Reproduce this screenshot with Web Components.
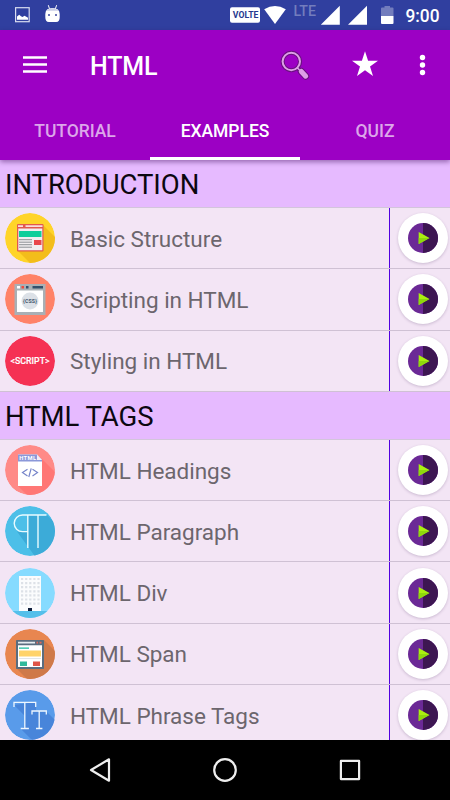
<!DOCTYPE html>
<html lang="en">
<head>
<meta charset="utf-8">
<title>HTML Examples</title>
<style>
html, body { margin: 0; height: 100%; overflow: hidden; }
body { font-family: Roboto, "Liberation Sans", sans-serif; }
</style>
</head>
<body>
<tutorial-app></tutorial-app>
<script>
const define = (name, html) => {
  const t = document.createElement('template');
  t.innerHTML = html;
  customElements.define(name, class extends HTMLElement {
    constructor() {
      super();
      this.attachShadow({ mode: 'open' }).append(t.content.cloneNode(true));
    }
  });
};

define('status-bar', `
<style>
:host { display: flex; height: 30px; background: #303f9f; color: #fff; }
svg { display: block; }
text { font-family: Roboto, sans-serif; }
</style>
<svg width="450" height="30" viewBox="0 0 450 30" fill="#fff">
  <rect x="15.6" y="7.7" width="13.6" height="14" fill="none" stroke="#d9dcf0" stroke-width="1.2"/>
  <path d="M17 19.8v-3.3l2.2-1.7 1.8 1.5 1.5.7 2-1.3 1.8 1 1.700 1v2.100z"/>
  <path d="M48.300 5.200l1.200 3.600M56.600 5.200l-1.200 3.600" stroke="#fff" stroke-width="1"/>
  <path d="M45.300 14q0-6 7.200-6t7.200 6v3q0 5-3.500 5h-7.400q-3.500 0-3.500-5z"/>
  <path d="M46.700 10.700q1.400-2.500 5.800-2.500t5.800 2.500z" fill="#c9cce4"/>
  <rect x="48" y="14" width="2" height="2" fill="#6b74b7"/><rect x="55" y="14" width="2" height="2" fill="#6b74b7"/>
  <rect x="230" y="7.300" width="30" height="15.500" rx="2"/>
  <text x="232.800" y="18.400" font-size="9" font-weight="700" textLength="25.600" lengthAdjust="spacingAndGlyphs" fill="#26378f">VOLTE</text>
  <path d="M264.200 9.200Q275 2.900 285.800 9.200L275 24z"/>
  <text x="293.400" y="16.300" font-size="14" font-weight="500" textLength="22.600" lengthAdjust="spacingAndGlyphs" fill="#737dbd">LTE</text>
  <path d="M320.800 24.700L339.800 5.700v19zM348 24.700L367 5.700v19z"/>
  <path d="M381 8.600q0-1 1-1h2.500V6h5.500v1.600h2.500q1 0 1 1V16h-12.500z" fill="#737dbd"/>
  <path d="M381 16h12.500v7q0 1-1 1H382q-1 0-1-1z"/>
  <text x="405.500" y="22" font-size="17.500" font-weight="500" textLength="34" lengthAdjust="spacingAndGlyphs">9:00</text>
</svg>`);

define('title-bar', `
<style>
:host { display: grid; grid-template-columns: 90px 1fr 70px 70px 58px; align-items: center; height: 71px; color: #fff; }
svg { display: block; }
.title { font-size: 25px; font-weight: 500; letter-spacing: -.15px; line-height: 30px; padding-top: 3px; }
</style>
<svg width="90" height="71" viewBox="0 0 90 71"><path d="M23 27.500h24M23 34.500h24M23 41.500h24" stroke="#fff" stroke-width="2.600"/></svg>
<span class="title"><slot></slot></span>
<svg width="70" height="71" viewBox="252 30 70 71">
  <path d="M301.300 71.500l4.400 4.700" stroke="#69107f" stroke-width="7" stroke-linecap="round"/>
  <circle cx="291.300" cy="61.500" r="8.700" fill="none" stroke="#69107f" stroke-width="4"/>
  <path d="M297 67.500l4 4" stroke="#69107f" stroke-width="4"/>
  <circle cx="291.300" cy="61.500" r="8.700" fill="none" stroke="#dda0e6" stroke-width="2"/>
  <path d="M297 67.500l4 4" stroke="#dda0e6" stroke-width="1.500"/>
  <path d="M301.300 71.500l4.400 4.700" stroke="#dda0e6" stroke-width="5" stroke-linecap="round"/>
</svg>
<svg width="70" height="71" viewBox="322 30 70 71"><path d="M365 51.300l3.100 9.400h9.900l-8 5.900 3 9.500-8-5.800-8 5.800 3-9.500-8-5.900h9.900z" fill="#fff"/></svg>
<svg width="58" height="71" viewBox="392 30 58 71" fill="#fff"><circle cx="422.500" cy="57.500" r="2.700"/><circle cx="422.500" cy="65" r="2.700"/><circle cx="422.500" cy="72.500" r="2.700"/></svg>`);

define('tab-item', `
<style>
:host { display: flex; flex: 1; align-items: center; justify-content: center; box-sizing: border-box; height: 59px;
  border-bottom: 3px solid transparent; padding-top: 4px; font-size: 17.500px; font-weight: 500; letter-spacing: -.05px; color: rgba(255,255,255,.66); }
:host([selected]) { color: #fff; border-color: #fff; }
</style><slot></slot>`);

define('app-bar', `
<style>
:host { display: block; height: 130px; background: #9c00c4; position: relative; z-index: 1; box-shadow: 0 2px 5px rgba(50,0,80,.45); }
.tabs { display: flex; }
</style>
<title-bar><slot></slot></title-bar>
<div class="tabs"><slot name="tabs"></slot></div>`);

define('section-title', `
<style>
:host { display: flex; align-items: center; box-sizing: border-box; height: 48.100px; padding: 3px 0 0 5px;
  border-bottom: 1px solid #d3c5dc; background: #e6baff; color: #0c0710; font-size: 27.500px; letter-spacing: -.05px; line-height: 32px; white-space: nowrap; }
</style><slot></slot>`);

define('play-button', `
<style>
:host { display: block; width: 50px; height: 50px; border-radius: 50%; background: #fff; box-shadow: 0 1px 3px rgba(60,30,80,.22); }
svg { display: block; }
</style>
<svg width="50" height="50" viewBox="0 0 50 50">
  <circle cx="25" cy="25" r="15" fill="#6b2996"/><path d="M25 10a15 15 0 0 1 0 30z" fill="#3d1652"/>
  <path d="M20.700 19v12L31.500 25z" fill="#aaf010"/><path d="M20.700 31v-6h10.800z" fill="#8ed80c"/>
</svg>`);

define('lesson-row', `
<style>
:host { display: grid; grid-template-columns: 70px 1fr 1px 60px; align-items: center; box-sizing: border-box; height: 61.250px;
  border-bottom: 1.250px solid #cfc1d4; background: #f3e5f5; color: #6c666d; font-size: 22.500px; white-space: nowrap; }
.icon { padding-left: 5px; height: 50px; }
.label { line-height: 28px; padding-top: 1px; letter-spacing: -.02px; }
.rule { align-self: stretch; background: #5100e0; }
play-button { margin-left: 7.500px; }
</style>
<div class="icon"><slot name="icon"></slot></div>
<span class="label"><slot></slot></span>
<span class="rule"></span>
<play-button></play-button>`);

const ART = {
  structure: `<circle cx="25" cy="25" r="25" fill="#ffd429"/><path d="M38 12L60 34V60H35L12 37z" fill="#f3bd1b"/>
    <rect x="12" y="11" width="26.500" height="27.500" rx="1" fill="#e2584f"/><path d="M13 12.200h5v1.700h-5zM20.500 12.200H37.500v1.700H20.500z" fill="#fff" opacity=".8"/>
    <path d="M13.300 15.500h24v21.800h-24z" fill="#f1eef0"/><path d="M14 18h22.500v6H14z" fill="#0fce9a"/><path d="M29 27h7.500v5H29z" fill="#e9484c"/>
    <path d="M14 26.700h13M14 29.200h13M14 31.700h13M14 34.200h13" stroke="#8d9296"/>`,
  css: `<circle cx="25" cy="25" r="25" fill="#ff8268"/><path d="M9.500 10h31v31h-31z" fill="#a9b0b5"/><path d="M12 16.500h26V38H12z" fill="#fff"/>
    <circle cx="25" cy="27" r="8.500" fill="#dce1e7"/><path d="M12 12h3v2.600h-3z" fill="#fff"/><path d="M16.500 12h2.500v2.600h-2.500z" fill="#f04b3d"/><path d="M21 12h2.500v2.600H21zM27.500 12H38v2.600H27.500z" fill="#33506b"/>
    <text x="18" y="28.700" font-size="5.300" font-weight="700" fill="#43566c" textLength="14">{CSS}</text>`,
  script: `<circle cx="25" cy="25" r="25" fill="#f53154"/><text x="5.600" y="27.800" font-size="8.300" font-weight="500" fill="#fff" stroke="#fff" stroke-width=".15" textLength="39" lengthAdjust="spacingAndGlyphs">&lt;SCRIPT&gt;</text>`,
  headings: `<circle cx="25" cy="25" r="25" fill="#ff8a87"/><path d="M37 14L60 37V60H32L13 41z" fill="#ff7775"/>
    <path d="M13 9.500h19l5 5.500v26H13z" fill="#fff"/><path d="M13 9.500h19V16.500H13z" fill="#8b98d9"/><path d="M32 9.500l5 5.500v1.500H32z" fill="#8b98d9"/><path d="M32 9.500v5.500h5z" fill="#f5eef7"/>
    <text x="14.200" y="15.400" font-size="5.800" font-weight="700" fill="#fff" textLength="17">HTML</text>
    <path d="M22.500 24.300l-5 3.300 5 3.300M27.500 24.300l5 3.300-5 3.300M26.200 23.300l-2.400 8.700" fill="none" stroke="#7685ca" stroke-width="1.200"/>`,
  paragraph: `<circle cx="25" cy="25" r="25" fill="#4cbfe8"/><path d="M23 9H42L60 27V60H37L12 25.600H23z" fill="#3cabd8"/>
    <path d="M41.500 9H17.500a8.300 8.300 0 0 0 0 16.600H22.800M22.800 9V42M33 9V42" fill="none" stroke="#e8fbff" stroke-width="1.400"/>`,
  div: `<circle cx="25" cy="25" r="25" fill="#86dbff"/><path d="M0 43h50v7H0z" fill="#55bfea"/><path d="M14 8h22v35H14z" fill="#fbfcfd"/>
    <g stroke="#dde1e7" stroke-width="2.200" stroke-dasharray="2.200 1.900">
    <path d="M16 11h18.600M16 15.100h18.600M16 19.200h18.600M16 23.300h18.600M16 27.400h18.600M16 31.500h18.600M16 35.600h18.600"/></g><path d="M23 40h4v3h-4z" fill="#10203d"/>`,
  span: `<circle cx="25" cy="25" r="25" fill="#e88650"/><path d="M39 11L60 32V60H32L11 39z" fill="#cf7949"/>
    <rect x="11" y="11" width="28" height="29" rx=".8" fill="#5a6d7e"/><path d="M13 16.200h24V38H13z" fill="#fff"/><path d="M13 12.700h17v1.800H13z" fill="#e5ecef"/><path d="M31.500 12.700h1.500v1.800h-1.500zM34.500 12.700h2v1.800h-2z" fill="#e5695a"/>
    <path d="M14 19.200h10" stroke="#19bb9c" stroke-width="1.200"/><path d="M14 21.500h22v6H14z" fill="#ffd36a"/><path d="M14 29.500h22" stroke="#e1e6e9"/><path d="M15 32.500h7V37h-7z" fill="#30b99b"/><path d="M28 32.500h7V37h-7z" fill="#df5547"/>`,
  phrase: `<circle cx="25" cy="25" r="25" fill="#599bea"/><path d="M31 12V21H41L60 40V60H37L16 39l4-3V26L9 15z" fill="#4885da"/>
    <g fill="none" stroke="#eef7ff" stroke-width="1.300"><path d="M9 17v-4.700h21.700V17M19.800 12.300V38.500M15.700 38.500h8.200M27 24.500V21h14.300v3.500M34.200 21v17.500M31 38.500h6.400"/></g>`
};

customElements.define('lesson-icon', class extends HTMLElement {
  constructor() {
    super();
    this.attachShadow({ mode: 'open' });
  }
  connectedCallback() {
    this.shadowRoot.innerHTML = `<style>:host { display: block; width: 50px; height: 50px; } svg { display: block; border-radius: 50%; overflow: hidden; } text { font-family: Roboto, sans-serif; }</style>
      <svg width="50" height="50" viewBox="0 0 50 50">${ART[this.getAttribute('name')]}</svg>`;
  }
});

define('nav-bar', `
<style>
:host { display: flex; justify-content: center; gap: 95px; align-items: center; height: 60px; background: #000; position: relative; z-index: 1; }
svg { display: block; fill: none; stroke: #eee; stroke-width: 2.200; stroke-linejoin: round; }
</style>
<svg width="30" height="30"><path d="M24 4.300v21.400L6 15z"/></svg>
<svg width="30" height="30"><circle cx="15" cy="15" r="10.800"/></svg>
<svg width="30" height="30"><rect x="5.900" y="5.900" width="18.200" height="18.200"/></svg>`);

const row = (icon, label) => `<lesson-row><lesson-icon slot="icon" name="${icon}"></lesson-icon>${label}</lesson-row>`;

define('tutorial-app', `
<style>
:host { display: grid; grid-template-rows: 30px 130px 580px 60px; width: 450px; height: 800px; overflow: hidden; }
main { overflow: hidden; background: #f3e5f5; }
</style>
<status-bar></status-bar>
<app-bar>HTML
  <tab-item slot="tabs">TUTORIAL</tab-item><tab-item slot="tabs" selected>EXAMPLES</tab-item><tab-item slot="tabs">QUIZ</tab-item>
</app-bar>
<main>
  <section-title>INTRODUCTION</section-title>
  ${row('structure', 'Basic Structure')}${row('css', 'Scripting in HTML')}${row('script', 'Styling in HTML')}
  <section-title>HTML TAGS</section-title>
  ${row('headings', 'HTML Headings')}${row('paragraph', 'HTML Paragraph')}${row('div', 'HTML Div')}${row('span', 'HTML Span')}${row('phrase', 'HTML Phrase Tags')}
</main>
<nav-bar></nav-bar>`);
</script>
</body>
</html>
